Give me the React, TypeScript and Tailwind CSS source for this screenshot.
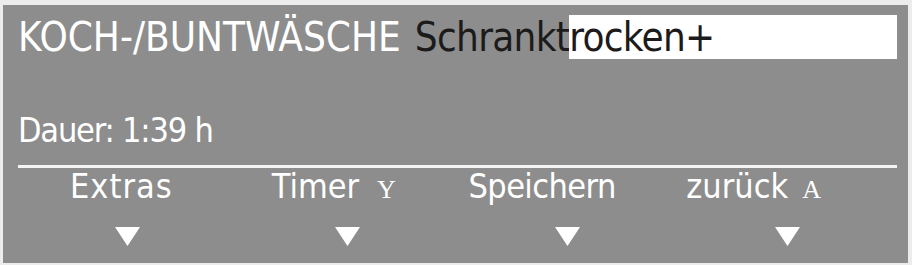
const tabs = [
  { label: 'Extras', key: '', pad: 'pl-[52px] tracking-[1px]', keyGap: '' },
  { label: 'Timer', key: 'Y', pad: 'pl-[34px]', keyGap: 'ml-[18px]' },
  { label: 'Speichern', key: '', pad: 'pl-[11px] tracking-[-0.6px]', keyGap: '' },
  { label: 'zurück', key: 'A', pad: 'pl-[9px]', keyGap: 'ml-[14px]' },
];

function Arrow() {
  return (
    <svg width="25" height="19" viewBox="0 0 25 19" className="block">
      <polygon points="0,0 25,0 12.5,19" fill="#ffffff" />
    </svg>
  );
}

export default function App() {
  return (
    <div className="w-[912px] h-[265px] bg-[#ececec] pt-[5px] pl-[3px] pr-[4px] pb-[2px]">
      <div
        className="h-full bg-[#8d8d8d] flex flex-col pt-[10px] pl-[15px] pr-[11px]"
        style={{ fontFamily: '"DejaVu Sans Condensed", "DejaVu Sans", sans-serif' }}
      >
        <div className="flex items-center h-[44px] text-[40px] leading-none whitespace-nowrap">
          <span className="text-white">KOCH-/BUNTWÄSCHE</span>
          <span className="ml-[14px] text-[#1b1b1b] tracking-[-0.7px]">Schrankt</span>
          <span className="flex-1 h-full bg-white text-[#1b1b1b] tracking-[-0.7px] flex items-center">
            rocken+
          </span>
        </div>

        <div className="mt-[51px] text-white text-[34px] tracking-[-1.2px] leading-none h-[40px] flex items-center">
          Dauer: 1:39 h
        </div>

        <div className="mt-[15px] h-[3px] bg-[#f4f4f4]" />

        <div className="grid grid-cols-4 mt-[1px]">
          {tabs.map((t) => (
            <div key={t.label} className="flex flex-col">
              <div className={`${t.pad} flex items-baseline text-white text-[34px] leading-none h-[32px]`}>
                <span>{t.label}</span>
                {t.key && (
                  <span
                    className={`${t.keyGap} text-[26px] tracking-normal`}
                    style={{ fontFamily: '"Liberation Serif", serif' }}
                  >
                    {t.key}
                  </span>
                )}
              </div>
              <div className="flex justify-center mt-[26px]">
                <Arrow />
              </div>
            </div>
          ))}
        </div>
      </div>
    </div>
  );
}
